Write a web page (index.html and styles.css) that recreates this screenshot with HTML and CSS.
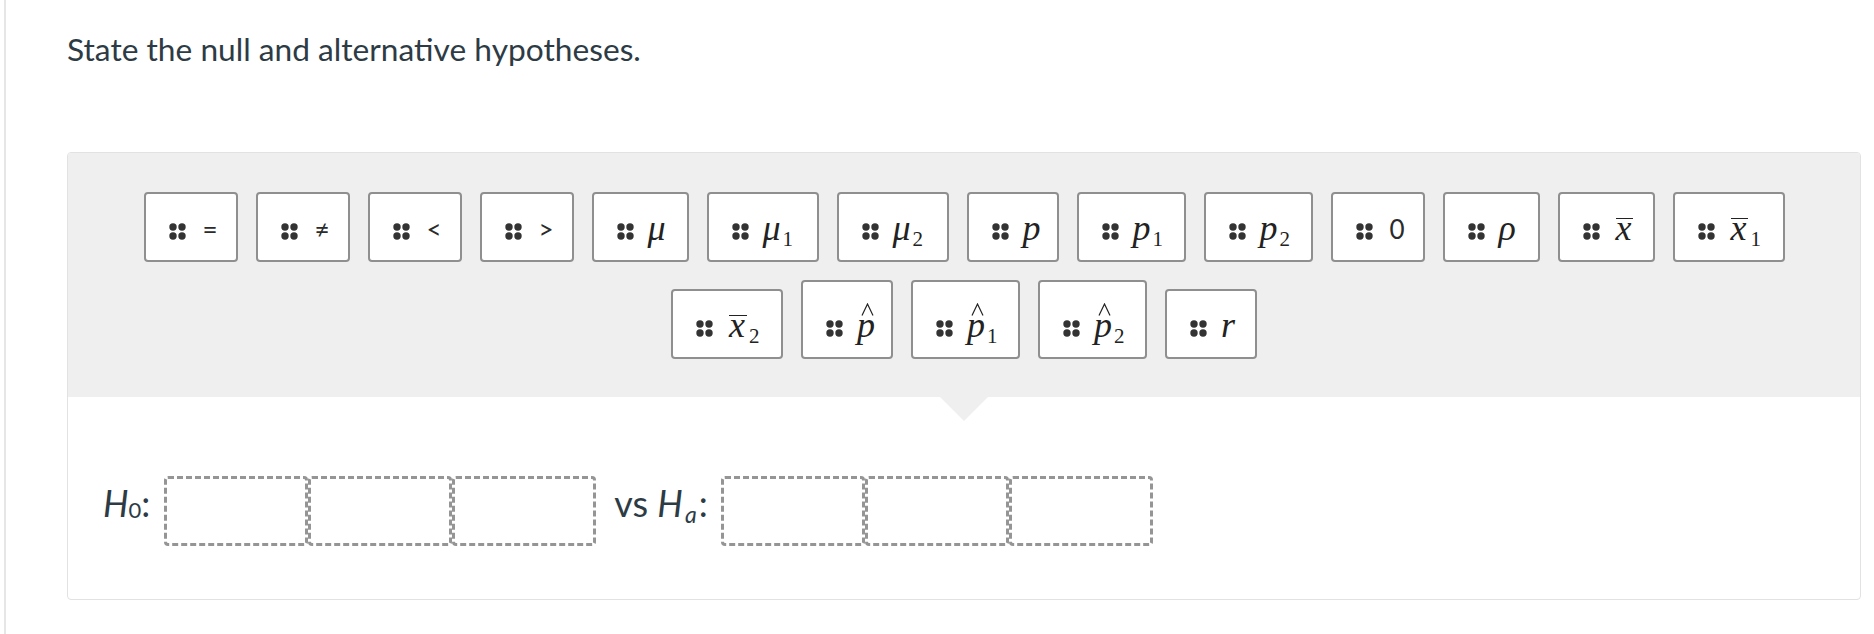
FILE: index.html
```html
<!DOCTYPE html>
<html lang="en">
<head>
<meta charset="utf-8">
<title>Hypotheses</title>
<link rel="stylesheet" href="styles.css">
</head>
<body>
<div class="page">
  <h1 class="question">State the null and alternative hypotheses.</h1>
  <div class="panel">
    <div class="bank">
      <div class="chips">
        <div class="chip"><svg class="grip" viewBox="0 0 17 17"><circle cx="4" cy="4" r="3.7"/><circle cx="13" cy="4" r="3.7"/><circle cx="4" cy="13" r="3.7"/><circle cx="13" cy="13" r="3.7"/></svg><span class="sym txt">=</span></div>
        <div class="chip"><svg class="grip" viewBox="0 0 17 17"><circle cx="4" cy="4" r="3.7"/><circle cx="13" cy="4" r="3.7"/><circle cx="4" cy="13" r="3.7"/><circle cx="13" cy="13" r="3.7"/></svg><span class="sym txt">≠</span></div>
        <div class="chip"><svg class="grip" viewBox="0 0 17 17"><circle cx="4" cy="4" r="3.7"/><circle cx="13" cy="4" r="3.7"/><circle cx="4" cy="13" r="3.7"/><circle cx="13" cy="13" r="3.7"/></svg><span class="sym txt">&lt;</span></div>
        <div class="chip"><svg class="grip" viewBox="0 0 17 17"><circle cx="4" cy="4" r="3.7"/><circle cx="13" cy="4" r="3.7"/><circle cx="4" cy="13" r="3.7"/><circle cx="13" cy="13" r="3.7"/></svg><span class="sym txt">&gt;</span></div>
        <div class="chip"><svg class="grip" viewBox="0 0 17 17"><circle cx="4" cy="4" r="3.7"/><circle cx="13" cy="4" r="3.7"/><circle cx="4" cy="13" r="3.7"/><circle cx="13" cy="13" r="3.7"/></svg><span class="sym wide"><i class="v">μ</i></span></div>
        <div class="chip"><svg class="grip" viewBox="0 0 17 17"><circle cx="4" cy="4" r="3.7"/><circle cx="13" cy="4" r="3.7"/><circle cx="4" cy="13" r="3.7"/><circle cx="13" cy="13" r="3.7"/></svg><span class="sym wide has-sub"><i class="v">μ</i><span class="sub">1</span></span></div>
        <div class="chip"><svg class="grip" viewBox="0 0 17 17"><circle cx="4" cy="4" r="3.7"/><circle cx="13" cy="4" r="3.7"/><circle cx="4" cy="13" r="3.7"/><circle cx="13" cy="13" r="3.7"/></svg><span class="sym wide has-sub"><i class="v">μ</i><span class="sub">2</span></span></div>
        <div class="chip"><svg class="grip" viewBox="0 0 17 17"><circle cx="4" cy="4" r="3.7"/><circle cx="13" cy="4" r="3.7"/><circle cx="4" cy="13" r="3.7"/><circle cx="13" cy="13" r="3.7"/></svg><span class="sym"><i class="v">p</i></span></div>
        <div class="chip"><svg class="grip" viewBox="0 0 17 17"><circle cx="4" cy="4" r="3.7"/><circle cx="13" cy="4" r="3.7"/><circle cx="4" cy="13" r="3.7"/><circle cx="13" cy="13" r="3.7"/></svg><span class="sym has-sub"><i class="v">p</i><span class="sub">1</span></span></div>
        <div class="chip"><svg class="grip" viewBox="0 0 17 17"><circle cx="4" cy="4" r="3.7"/><circle cx="13" cy="4" r="3.7"/><circle cx="4" cy="13" r="3.7"/><circle cx="13" cy="13" r="3.7"/></svg><span class="sym has-sub"><i class="v">p</i><span class="sub">2</span></span></div>
        <div class="chip"><svg class="grip" viewBox="0 0 17 17"><circle cx="4" cy="4" r="3.7"/><circle cx="13" cy="4" r="3.7"/><circle cx="4" cy="13" r="3.7"/><circle cx="13" cy="13" r="3.7"/></svg><span class="sym txt">0</span></div>
        <div class="chip"><svg class="grip" viewBox="0 0 17 17"><circle cx="4" cy="4" r="3.7"/><circle cx="13" cy="4" r="3.7"/><circle cx="4" cy="13" r="3.7"/><circle cx="13" cy="13" r="3.7"/></svg><span class="sym wide"><i class="v">ρ</i></span></div>
        <div class="chip"><svg class="grip" viewBox="0 0 17 17"><circle cx="4" cy="4" r="3.7"/><circle cx="13" cy="4" r="3.7"/><circle cx="4" cy="13" r="3.7"/><circle cx="13" cy="13" r="3.7"/></svg><span class="sym wide"><i class="v ov">x</i></span></div>
        <div class="chip"><svg class="grip" viewBox="0 0 17 17"><circle cx="4" cy="4" r="3.7"/><circle cx="13" cy="4" r="3.7"/><circle cx="4" cy="13" r="3.7"/><circle cx="13" cy="13" r="3.7"/></svg><span class="sym wide has-sub"><i class="v ov">x</i><span class="sub">1</span></span></div>
        <div class="chip"><svg class="grip" viewBox="0 0 17 17"><circle cx="4" cy="4" r="3.7"/><circle cx="13" cy="4" r="3.7"/><circle cx="4" cy="13" r="3.7"/><circle cx="13" cy="13" r="3.7"/></svg><span class="sym wide has-sub"><i class="v ov">x</i><span class="sub">2</span></span></div>
        <div class="chip"><svg class="grip" viewBox="0 0 17 17"><circle cx="4" cy="4" r="3.7"/><circle cx="13" cy="4" r="3.7"/><circle cx="4" cy="13" r="3.7"/><circle cx="13" cy="13" r="3.7"/></svg><span class="mcol"><svg class="hat" viewBox="0 0 13 13"><polyline points="1,12.5 6.5,1 12,12.5"/></svg><span class="sym"><i class="v">p</i></span></span></div>
        <div class="chip"><svg class="grip" viewBox="0 0 17 17"><circle cx="4" cy="4" r="3.7"/><circle cx="13" cy="4" r="3.7"/><circle cx="4" cy="13" r="3.7"/><circle cx="13" cy="13" r="3.7"/></svg><span class="mcol"><svg class="hat" viewBox="0 0 13 13"><polyline points="1,12.5 6.5,1 12,12.5"/></svg><span class="sym has-sub"><i class="v">p</i><span class="sub">1</span></span></span></div>
        <div class="chip"><svg class="grip" viewBox="0 0 17 17"><circle cx="4" cy="4" r="3.7"/><circle cx="13" cy="4" r="3.7"/><circle cx="4" cy="13" r="3.7"/><circle cx="13" cy="13" r="3.7"/></svg><span class="mcol"><svg class="hat" viewBox="0 0 13 13"><polyline points="1,12.5 6.5,1 12,12.5"/></svg><span class="sym has-sub"><i class="v">p</i><span class="sub">2</span></span></span></div>
        <div class="chip"><svg class="grip" viewBox="0 0 17 17"><circle cx="4" cy="4" r="3.7"/><circle cx="13" cy="4" r="3.7"/><circle cx="4" cy="13" r="3.7"/><circle cx="13" cy="13" r="3.7"/></svg><span class="sym"><i class="v">r</i></span></div>
      </div>
    </div>
    <div class="answer">
      <span class="label"><i>H</i><span class="sub0">0</span>:</span>
      <div class="slots"><div class="slot"></div><div class="slot"></div><div class="slot"></div></div>
      <span class="label vs">vs <i>H</i><i class="suba">a</i>:</span>
      <div class="slots"><div class="slot"></div><div class="slot"></div><div class="slot"></div></div>
    </div>
  </div>
</div>
</body>
</html>
```

FILE: styles.css
```css
* { box-sizing: border-box; }

html, body {
  margin: 0;
  padding: 0;
  background: #ffffff;
}

.page {
  margin-left: 4px;
  border-left: 2px solid #e6e6e6;
  min-height: 634px;
  padding: 30px 13px 0 61px;
  font-family: "Lato", "Liberation Sans", sans-serif;
  color: #2d3b45;
}

.question {
  margin: 0 0 84px 0;
  font-size: 31.7px;
  line-height: 38px;
  font-weight: 400;
  color: #2d3b45;
}

.panel {
  border: 1px solid #e2e2e2;
  border-radius: 4px;
  background: #ffffff;
}

.bank {
  position: relative;
  background: #efefef;
  padding: 39px 40px 38px 40px;
  border-radius: 3px 3px 0 0;
}

.bank::after {
  content: "";
  position: absolute;
  left: 50%;
  bottom: -24px;
  margin-left: -24px;
  border-left: 24px solid transparent;
  border-right: 24px solid transparent;
  border-top: 24px solid #efefef;
}

.chips {
  display: flex;
  flex-wrap: wrap;
  justify-content: center;
  align-items: flex-end;
  column-gap: 18px;
  row-gap: 18px;
}

.chip {
  display: flex;
  align-items: flex-end;
  gap: 14px;
  padding: 18px 15px 14px 23px;
  background: #ffffff;
  border: 2px solid #8f8f8f;
  border-radius: 4px;
  color: #222222;
}

.grip {
  width: 17px;
  height: 17px;
  margin-bottom: 6px;
  fill: #333333;
  flex: none;
}

.sym {
  display: block;
  min-width: 19px;
  height: 34px;
  line-height: 32px;
  white-space: nowrap;
  font-family: "Liberation Serif", "Times New Roman", serif;
  font-size: 36px;
}

.sym.wide {
  min-width: 24px;
}

.sym.has-sub {
  min-width: 36px;
}

.sym.wide.has-sub {
  min-width: 39px;
}

.sym.txt {
  width: 21px;
  text-align: center;
  font-family: "Lato", "DejaVu Sans", sans-serif;
  font-size: 26px;
  line-height: 34px;
  color: #2b2b2b;
}

.v {
  font-style: italic;
}

.ov {
  position: relative;
  display: inline-block;
  padding: 0 2px;
}

.ov::before {
  content: "";
  position: absolute;
  left: 2px;
  right: 0;
  top: 6px;
  border-top: 1.5px solid #222222;
}

.sub {
  display: inline-block;
  font-style: normal;
  font-size: 21px;
  line-height: 21px;
  margin-left: 2px;
  vertical-align: -6px;
}

.mcol {
  display: flex;
  flex-direction: column;
  align-items: flex-start;
}

.hat {
  width: 13px;
  height: 13px;
  margin: 3px 0 -7px 4px;
  fill: none;
  stroke: #222222;
  stroke-width: 1.2;
}

.answer {
  display: flex;
  align-items: flex-start;
  padding: 79px 0 53px 35px;
}

.label {
  margin-top: 7px;
  font-size: 36px;
  line-height: 40px;
  color: #2d3b45;
  white-space: nowrap;
  margin-right: 14px;
}

.label i {
  font-style: italic;
}

.sub0 {
  font-size: 22px;
  vertical-align: -1px;
}

.suba {
  font-size: 23px;
  vertical-align: -6px;
  margin-left: 2px;
  margin-right: 2px;
}

.vs {
  margin-left: 18px;
  margin-right: 13px;
}

.slots {
  display: flex;
}

.slot {
  width: 144px;
  height: 70px;
  border: 3px dashed #959595;
  border-radius: 4px;
}
```
